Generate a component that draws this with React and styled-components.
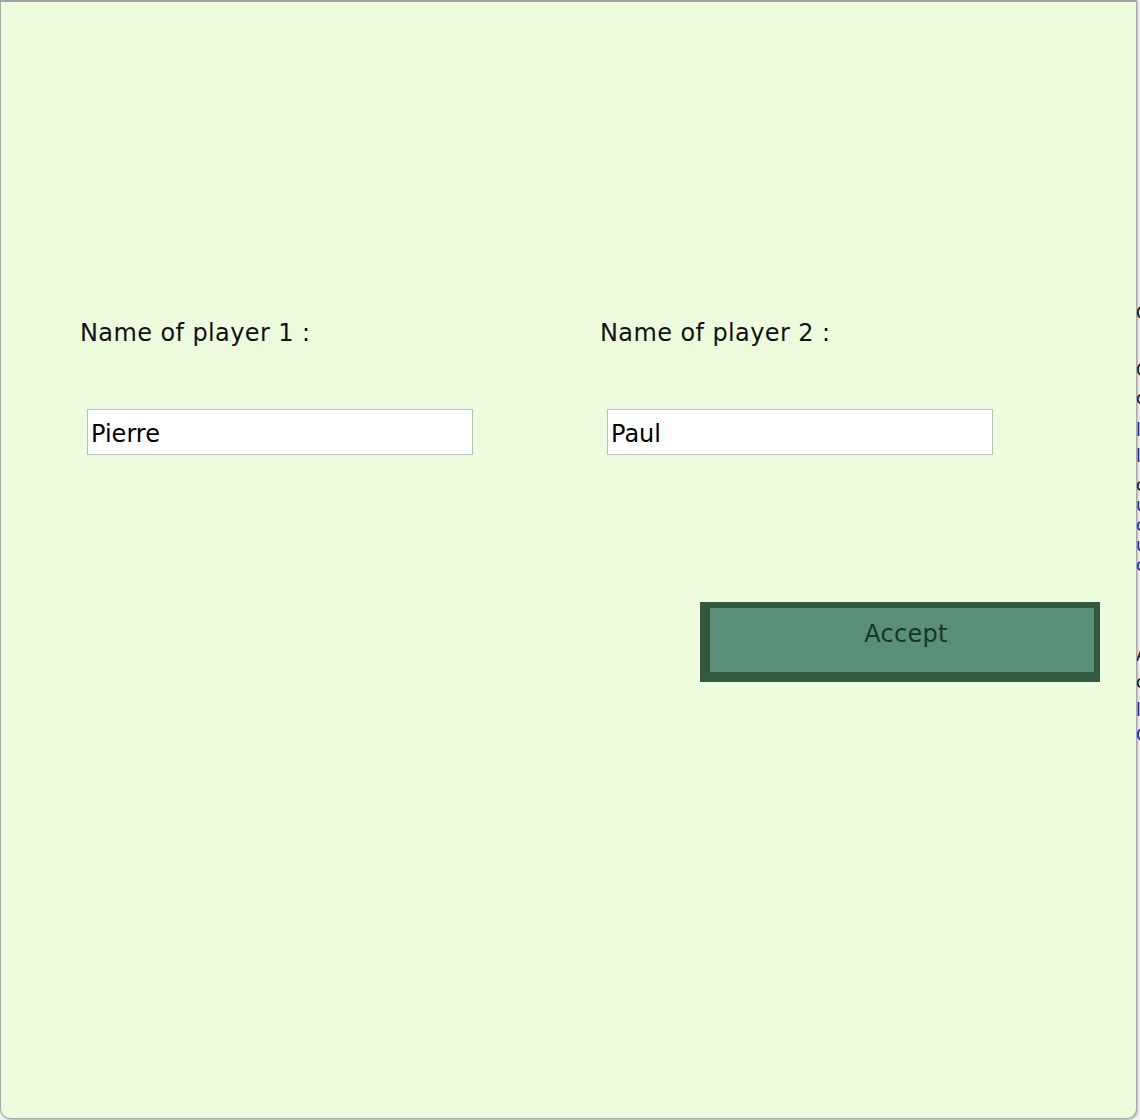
import React from "react";
import styled, { createGlobalStyle } from "styled-components";

const GlobalStyle = createGlobalStyle`
  html, body {
    margin: 0;
    padding: 0;
    background: #d6d6d6;
  }
  body {
    font-family: "DejaVu Sans", "Liberation Sans", sans-serif;
  }
`;

const Desktop = styled.div`
  position: relative;
  width: 1140px;
  height: 1120px;
  overflow: hidden;
  background: #f2f2f2;
`;

const BackPage = styled.div`
  display: flex;
  flex-direction: column;
  align-items: flex-start;
  padding: 303px 0 0 1136px;
  font-size: 17px;
  line-height: 20px;
  white-space: nowrap;
`;

const BackLine = styled.span`
  margin-top: ${(p) => p.$gap || 0}px;
  color: ${(p) => (p.$link ? "#2323c8" : "#111")};
`;

const Window = styled.div`
  position: absolute;
  top: 0;
  left: 0;
  width: 1135px;
  height: 1116px;
  background: #edfcdc;
  border: 1px solid #a9a9a9;
  border-top: 2px solid #a4a4a4;
  border-radius: 0 0 10px 10px;
  box-shadow: 1px 1px 2px rgba(0, 0, 0, 0.25);
`;

const Form = styled.div`
  display: grid;
  grid-template-columns: 520px 520px;
  padding: 317px 0 0 79px;
`;

const Field = styled.div`
  display: flex;
  flex-direction: column;
`;

const Label = styled.label`
  font-size: 24px;
  line-height: 28px;
  letter-spacing: 0.4px;
  color: #111;
`;

const NameInput = styled.input`
  box-sizing: border-box;
  width: 386px;
  height: 46px;
  margin: 62px 0 0 7px;
  padding: 4px 3px 0;
  border: 1px solid #bcbcbc;
  background: #fff;
  font-family: "DejaVu Sans", sans-serif;
  font-size: 24px;
  color: #000;
  outline: none;
`;

const Actions = styled.div`
  grid-column: 2;
  margin-top: 147px;
`;

const AcceptButton = styled.button`
  box-sizing: border-box;
  width: 400px;
  height: 80px;
  margin-left: 100px;
  background: #5a9079;
  border-style: solid;
  border-color: #33583f;
  border-width: 6px 6px 10px 10px;
  font-family: "DejaVu Sans", sans-serif;
  font-size: 24px;
  letter-spacing: 0.3px;
  color: #163722;
  padding: 0 0 13px 8px;
  cursor: pointer;
`;

const lines = [
  { t: "C", gap: 0 },
  { t: "C", gap: 37 },
  { t: "c", gap: 8 },
  { t: "l", gap: 12, link: true },
  { t: "l", gap: 6, link: true },
  { t: "c", gap: 9 },
  { t: "u", gap: 0, link: true },
  { t: "c", gap: 0, link: true },
  { t: "u", gap: 0, link: true },
  { t: "c", gap: 0, link: true },
  { t: "A", gap: 70 },
  { t: "c", gap: 7 },
  { t: "l", gap: 8, link: true },
  { t: "C", gap: 5, link: true },
];

export default function App() {
  return (
    <>
      <GlobalStyle />
      <Desktop>
        <BackPage>
          {lines.map((l, i) => (
            <BackLine key={i} $gap={l.gap} $link={l.link}>
              {l.t}
            </BackLine>
          ))}
        </BackPage>
        <Window>
          <Form>
            <Field>
              <Label>Name of player 1 :</Label>
              <NameInput defaultValue="Pierre" />
            </Field>
            <Field>
              <Label>Name of player 2 :</Label>
              <NameInput defaultValue="Paul" />
            </Field>
            <Actions>
              <AcceptButton>Accept</AcceptButton>
            </Actions>
          </Form>
        </Window>
      </Desktop>
    </>
  );
}
